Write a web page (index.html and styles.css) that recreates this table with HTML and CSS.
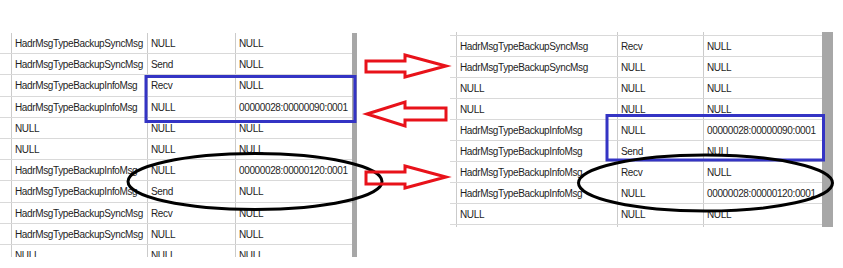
FILE: index.html
```html
<!DOCTYPE html>
<html>
<head>
<meta charset="utf-8">
<link rel="stylesheet" href="styles.css">
</head>
<body>
<div class="stage">
  <div class="table left">
    <div class="rows">
      <div class="row"><div class="hdr"></div><div class="c">HadrMsgTypeBackupSyncMsg</div><div class="c">NULL</div><div class="c">NULL</div></div>
      <div class="row"><div class="hdr"></div><div class="c">HadrMsgTypeBackupSyncMsg</div><div class="c">Send</div><div class="c">NULL</div></div>
      <div class="row"><div class="hdr"></div><div class="c">HadrMsgTypeBackupInfoMsg</div><div class="c">Recv</div><div class="c">NULL</div></div>
      <div class="row"><div class="hdr"></div><div class="c">HadrMsgTypeBackupInfoMsg</div><div class="c">NULL</div><div class="c">00000028:00000090:0001</div></div>
      <div class="row"><div class="hdr"></div><div class="c">NULL</div><div class="c">NULL</div><div class="c">NULL</div></div>
      <div class="row"><div class="hdr"></div><div class="c">NULL</div><div class="c">NULL</div><div class="c">NULL</div></div>
      <div class="row"><div class="hdr"></div><div class="c">HadrMsgTypeBackupInfoMsg</div><div class="c">NULL</div><div class="c">00000028:00000120:0001</div></div>
      <div class="row"><div class="hdr"></div><div class="c">HadrMsgTypeBackupInfoMsg</div><div class="c">Send</div><div class="c">NULL</div></div>
      <div class="row"><div class="hdr"></div><div class="c">HadrMsgTypeBackupSyncMsg</div><div class="c">Recv</div><div class="c">NULL</div></div>
      <div class="row"><div class="hdr"></div><div class="c">HadrMsgTypeBackupSyncMsg</div><div class="c">NULL</div><div class="c">NULL</div></div>
      <div class="row"><div class="hdr"></div><div class="c">NULL</div><div class="c">NULL</div><div class="c">NULL</div></div>
    </div>
    <div class="scroll"></div>
  </div>

  <div class="table right">
    <div class="rows">
      <div class="row partial"><div class="hdr"></div><div class="c"></div><div class="c"></div><div class="c"></div></div>
      <div class="row"><div class="hdr"></div><div class="c">HadrMsgTypeBackupSyncMsg</div><div class="c">Recv</div><div class="c">NULL</div></div>
      <div class="row"><div class="hdr"></div><div class="c">HadrMsgTypeBackupSyncMsg</div><div class="c">NULL</div><div class="c">NULL</div></div>
      <div class="row"><div class="hdr"></div><div class="c">NULL</div><div class="c">NULL</div><div class="c">NULL</div></div>
      <div class="row"><div class="hdr"></div><div class="c">NULL</div><div class="c">NULL</div><div class="c">NULL</div></div>
      <div class="row"><div class="hdr"></div><div class="c">HadrMsgTypeBackupInfoMsg</div><div class="c">NULL</div><div class="c">00000028:00000090:0001</div></div>
      <div class="row"><div class="hdr"></div><div class="c">HadrMsgTypeBackupInfoMsg</div><div class="c">Send</div><div class="c">NULL</div></div>
      <div class="row"><div class="hdr"></div><div class="c">HadrMsgTypeBackupInfoMsg</div><div class="c">Recv</div><div class="c">NULL</div></div>
      <div class="row"><div class="hdr"></div><div class="c">HadrMsgTypeBackupInfoMsg</div><div class="c">NULL</div><div class="c">00000028:00000120:0001</div></div>
      <div class="row"><div class="hdr"></div><div class="c">NULL</div><div class="c">NULL</div><div class="c">NULL</div></div>
      <div class="row"><div class="hdr"></div><div class="c"></div><div class="c"></div><div class="c"></div></div>
    </div>
    <div class="scroll"></div>
  </div>

  <svg class="overlay" width="843" height="268" viewBox="0 0 843 268">
    <rect x="146" y="76.5" width="209" height="45" class="blue"/>
    <rect x="607" y="115.5" width="216.5" height="44.5" class="blue"/>
    <ellipse cx="255" cy="181.5" rx="127" ry="28" class="ring"/>
    <ellipse cx="705.5" cy="183" rx="127" ry="28" class="ring"/>
    <polygon class="arrow" points="366,61 405,61 405,55 446,66 405,77 405,72 366,72"/>
    <polygon class="arrow" points="367,114 405,102 405,108 446,108 446,120 405,120 405,126"/>
    <polygon class="arrow" points="366,172 405,172 405,166 446,177 405,188 405,184 366,184"/>
  </svg>
</div>
</body>
</html>
```

FILE: styles.css
```css
html, body {
  margin: 0;
  padding: 0;
  background: #ffffff;
}

.stage {
  position: relative;
  width: 843px;
  height: 268px;
  display: flex;
  align-items: flex-start;
  overflow: hidden;
  background: #ffffff;
  font-family: "Liberation Sans", Arial, sans-serif;
  font-size: 10px;
  letter-spacing: -0.37px;
  color: #1e1e1e;
}

.table {
  display: flex;
  align-items: flex-start;
}

.rows {
  overflow: hidden;
}

.row {
  display: grid;
  box-sizing: border-box;
  border-bottom: 1px solid #d9d9d9;
}

.c {
  border-left: 1px solid #cbcbcb;
  padding: 1px 0 0 3px;
  line-height: 19px;
  white-space: nowrap;
  overflow: hidden;
}

.scroll {
  background: #a7a7a7;
}

/* left grid */
.left {
  margin-top: 33px;
}

.left .rows {
  width: 352px;
  height: 224px;
}

.left .row {
  grid-template-columns: 11px 136px 88px 117px;
  height: 21.2px;
}

.left .scroll {
  width: 5px;
  height: 224px;
}

/* right grid */
.right {
  margin-left: 93px;
  margin-top: 32px;
}

.right .rows {
  width: 372px;
  height: 195px;
}

.right .row {
  grid-template-columns: 6px 161px 86px 119px;
  height: 21px;
}

.right .row.partial {
  height: 4px;
}

.right .scroll {
  width: 11px;
  height: 195px;
}

/* annotations */
.overlay {
  position: absolute;
  left: 0;
  top: 0;
  pointer-events: none;
}

.blue {
  fill: none;
  stroke: #3434c4;
  stroke-width: 3;
}

.ring {
  fill: none;
  stroke: #000000;
  stroke-width: 3;
}

.arrow {
  fill: none;
  stroke: #e8121a;
  stroke-width: 3;
  stroke-linejoin: miter;
}
```
